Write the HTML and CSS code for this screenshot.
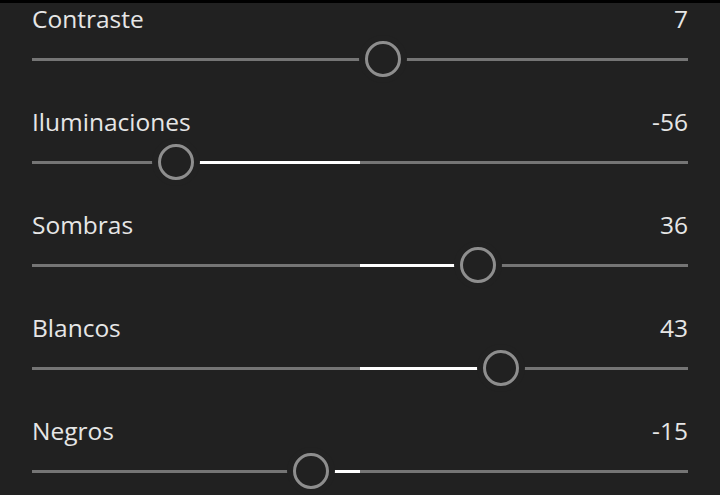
FILE: index.html
```html
<!DOCTYPE html>
<html lang="es">
<head>
<meta charset="utf-8">
<link rel="stylesheet" href="styles.css">
</head>
<body>
<div class="panel">
  <div class="row">
    <div class="head"><span>Contraste</span><span>7</span></div>
    <div class="slider"><div class="track"></div><div class="fill" style="left:50%;width:3.5%"></div><div class="thumb" style="left:53.5%"></div></div>
  </div>
  <div class="row">
    <div class="head"><span>Iluminaciones</span><span>-56</span></div>
    <div class="slider"><div class="track"></div><div class="fill" style="left:22%;width:28%"></div><div class="thumb" style="left:22%"></div></div>
  </div>
  <div class="row">
    <div class="head"><span>Sombras</span><span>36</span></div>
    <div class="slider"><div class="track"></div><div class="fill" style="left:50%;width:18%"></div><div class="thumb" style="left:68%"></div></div>
  </div>
  <div class="row">
    <div class="head"><span>Blancos</span><span>43</span></div>
    <div class="slider"><div class="track"></div><div class="fill" style="left:50%;width:21.5%"></div><div class="thumb" style="left:71.5%"></div></div>
  </div>
  <div class="row">
    <div class="head"><span>Negros</span><span>-15</span></div>
    <div class="slider"><div class="track"></div><div class="fill" style="left:42.5%;width:7.5%"></div><div class="thumb" style="left:42.5%"></div></div>
  </div>
</div>
</body>
</html>
```
FILE: styles.css
```css
html, body {
  margin: 0;
  padding: 0;
  background: #212121;
  height: 100%;
  overflow: hidden;
}
.panel {
  border-top: 3px solid #000;
  padding: 0 32px;
  font-family: "Open Sans", "Noto Sans", sans-serif;
  color: #e6e6e6;
}
.row {
  height: 103px;
}
.head {
  display: flex;
  justify-content: space-between;
  height: 32px;
  line-height: 32px;
  font-size: 24.5px;
}
.slider {
  position: relative;
  height: 36px;
  margin-top: 6px;
}
.track {
  position: absolute;
  left: 0;
  right: 0;
  top: 17px;
  height: 3px;
  background: #757575;
}
.fill {
  position: absolute;
  top: 17px;
  height: 3px;
  background: #ffffff;
}
.thumb {
  position: absolute;
  top: 0;
  width: 30px;
  height: 30px;
  margin-left: -18px;
  border: 3px solid #8e8e8e;
  border-radius: 50%;
  background: #212121;
  box-shadow: 0 0 0 6px #212121;
}
```
